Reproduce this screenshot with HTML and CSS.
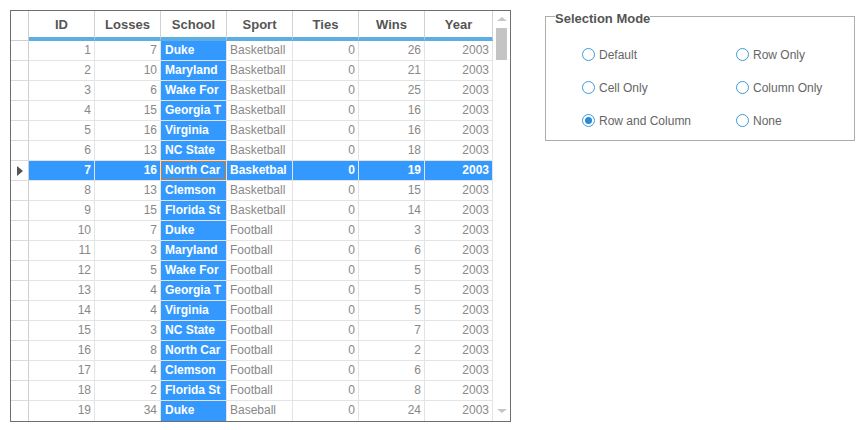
FILE: index.html
```html
<!DOCTYPE html>
<html>
<head>
<meta charset="utf-8">
<link rel="stylesheet" href="styles.css">
</head>
<body>
<div class="page">
  <div class="grid">
    <div class="table">
      <div class="row head">
        <div class="h rh"></div>
        <div class="h">ID</div>
        <div class="h">Losses</div>
        <div class="h">School</div>
        <div class="h">Sport</div>
        <div class="h">Ties</div>
        <div class="h">Wins</div>
        <div class="h">Year</div>
      </div>
      <div class="row"><div class="c rh"></div><div class="c n">1</div><div class="c n">7</div><div class="c s">Duke</div><div class="c t">Basketball</div><div class="c n">0</div><div class="c n">26</div><div class="c n">2003</div></div>
      <div class="row"><div class="c rh"></div><div class="c n">2</div><div class="c n">10</div><div class="c s">Maryland</div><div class="c t">Basketball</div><div class="c n">0</div><div class="c n">21</div><div class="c n">2003</div></div>
      <div class="row"><div class="c rh"></div><div class="c n">3</div><div class="c n">6</div><div class="c s">Wake For</div><div class="c t">Basketball</div><div class="c n">0</div><div class="c n">25</div><div class="c n">2003</div></div>
      <div class="row"><div class="c rh"></div><div class="c n">4</div><div class="c n">15</div><div class="c s">Georgia T</div><div class="c t">Basketball</div><div class="c n">0</div><div class="c n">16</div><div class="c n">2003</div></div>
      <div class="row"><div class="c rh"></div><div class="c n">5</div><div class="c n">16</div><div class="c s">Virginia</div><div class="c t">Basketball</div><div class="c n">0</div><div class="c n">16</div><div class="c n">2003</div></div>
      <div class="row"><div class="c rh"></div><div class="c n">6</div><div class="c n">13</div><div class="c s">NC State</div><div class="c t">Basketball</div><div class="c n">0</div><div class="c n">18</div><div class="c n">2003</div></div>
      <div class="row sel"><div class="c rh"><svg width="6" height="10" viewBox="0 0 6 10"><polygon points="0,0 6,5 0,10" fill="#555"/></svg></div><div class="c n">7</div><div class="c n">16</div><div class="c s cur">North Car</div><div class="c t">Basketbal</div><div class="c n">0</div><div class="c n">19</div><div class="c n">2003</div></div>
      <div class="row"><div class="c rh"></div><div class="c n">8</div><div class="c n">13</div><div class="c s">Clemson</div><div class="c t">Basketball</div><div class="c n">0</div><div class="c n">15</div><div class="c n">2003</div></div>
      <div class="row"><div class="c rh"></div><div class="c n">9</div><div class="c n">15</div><div class="c s">Florida St</div><div class="c t">Basketball</div><div class="c n">0</div><div class="c n">14</div><div class="c n">2003</div></div>
      <div class="row"><div class="c rh"></div><div class="c n">10</div><div class="c n">7</div><div class="c s">Duke</div><div class="c t">Football</div><div class="c n">0</div><div class="c n">3</div><div class="c n">2003</div></div>
      <div class="row"><div class="c rh"></div><div class="c n">11</div><div class="c n">3</div><div class="c s">Maryland</div><div class="c t">Football</div><div class="c n">0</div><div class="c n">6</div><div class="c n">2003</div></div>
      <div class="row"><div class="c rh"></div><div class="c n">12</div><div class="c n">5</div><div class="c s">Wake For</div><div class="c t">Football</div><div class="c n">0</div><div class="c n">5</div><div class="c n">2003</div></div>
      <div class="row"><div class="c rh"></div><div class="c n">13</div><div class="c n">4</div><div class="c s">Georgia T</div><div class="c t">Football</div><div class="c n">0</div><div class="c n">5</div><div class="c n">2003</div></div>
      <div class="row"><div class="c rh"></div><div class="c n">14</div><div class="c n">4</div><div class="c s">Virginia</div><div class="c t">Football</div><div class="c n">0</div><div class="c n">5</div><div class="c n">2003</div></div>
      <div class="row"><div class="c rh"></div><div class="c n">15</div><div class="c n">3</div><div class="c s">NC State</div><div class="c t">Football</div><div class="c n">0</div><div class="c n">7</div><div class="c n">2003</div></div>
      <div class="row"><div class="c rh"></div><div class="c n">16</div><div class="c n">8</div><div class="c s">North Car</div><div class="c t">Football</div><div class="c n">0</div><div class="c n">2</div><div class="c n">2003</div></div>
      <div class="row"><div class="c rh"></div><div class="c n">17</div><div class="c n">4</div><div class="c s">Clemson</div><div class="c t">Football</div><div class="c n">0</div><div class="c n">6</div><div class="c n">2003</div></div>
      <div class="row"><div class="c rh"></div><div class="c n">18</div><div class="c n">2</div><div class="c s">Florida St</div><div class="c t">Football</div><div class="c n">0</div><div class="c n">8</div><div class="c n">2003</div></div>
      <div class="row last"><div class="c rh"></div><div class="c n">19</div><div class="c n">34</div><div class="c s">Duke</div><div class="c t">Baseball</div><div class="c n">0</div><div class="c n">24</div><div class="c n">2003</div></div>
    </div>
    <div class="scroll">
      <div class="arrow up"></div>
      <div class="thumb"></div>
      <div class="spacer"></div>
      <div class="arrow down"></div>
    </div>
  </div>

  <fieldset class="modes">
    <legend>Selection Mode</legend>
    <div class="opts">
      <label class="opt"><span class="radio"></span>Default</label>
      <label class="opt"><span class="radio"></span>Row Only</label>
      <label class="opt"><span class="radio"></span>Cell Only</label>
      <label class="opt"><span class="radio"></span>Column Only</label>
      <label class="opt"><span class="radio on"></span>Row and Column</label>
      <label class="opt"><span class="radio"></span>None</label>
    </div>
  </fieldset>
</div>
</body>
</html>
```

FILE: styles.css
```css
* { box-sizing: border-box; }
html, body { margin: 0; padding: 0; background: #fff; }
body { font-family: "Liberation Sans", Arial, sans-serif; }

.page {
  display: flex;
  align-items: flex-start;
  padding: 10px 0 0 10px;
  gap: 34px;
}

.grid {
  display: flex;
  width: 501px;
  height: 412px;
  border: 1px solid #6e6e6e;
  overflow: hidden;
}

.table { width: 482px; }

.row {
  display: grid;
  grid-template-columns: 18px repeat(6, 66px) 68px;
  height: 20px;
}

.row.head { height: 30px; }

.h {
  height: 30px;
  border-right: 1px solid #d2d2d2;
  border-bottom: 4px solid #5eaee0;
  font-size: 13px;
  font-weight: bold;
  color: #555;
  line-height: 24px;
  padding-top: 2px;
  text-align: center;
}
.h.rh { border-bottom: 1px solid #cfcfcf; border-right-color: #cfcfcf; }

.c {
  height: 20px;
  border-right: 1px solid #e4e4e4;
  border-bottom: 1px solid #e4e4e4;
  font-size: 12px;
  line-height: 19px;
  color: #888;
  white-space: nowrap;
  overflow: hidden;
  padding: 0 3px;
}
.c.rh {
  border-right-color: #cfcfcf;
  border-bottom-color: #dcdcdc;
  display: flex;
  align-items: center;
  justify-content: center;
  padding: 0;
}
.c.n { text-align: right; }
.c.t { text-align: left; }
.c.s {
  background: #3399ff;
  color: #fff;
  font-weight: bold;
  padding-left: 4px;
}

.sel .c { background: #3399ff; color: #fff; font-weight: bold; }
.sel .c.rh { background: #fff; }
.sel .c.cur { box-shadow: inset 0 0 0 1px #c97a2c; }

.row.last .c { border-bottom: none; }

.scroll {
  width: 17px;
  display: flex;
  flex-direction: column;
  align-items: center;
  padding: 6px 0 8px;
}
.arrow {
  width: 0;
  height: 0;
  border-left: 5px solid transparent;
  border-right: 5px solid transparent;
}
.arrow.up { border-bottom: 4px solid #c6c6c6; }
.arrow.down { border-top: 4px solid #c6c6c6; }
.thumb {
  width: 11px;
  height: 32px;
  margin-top: 7px;
  background: #c4c4c4;
}
.spacer { flex: 1; }

.modes {
  width: 310px;
  margin: -4px 0 0 0;
  padding: 0;
  border: 1px solid #adadad;
}
.modes legend {
  font-size: 13px;
  font-weight: bold;
  color: #555;
  line-height: 15px;
  padding: 5px 0 0 0;
  margin-left: 9px;
}

.opts {
  display: grid;
  grid-template-columns: 154px 1fr;
  grid-auto-rows: 33px;
  padding: 12px 0 3px 36px;
}
.opt {
  display: flex;
  align-items: center;
  gap: 4px;
  font-size: 12px;
  color: #666;
}
.radio {
  width: 13px;
  height: 13px;
  border: 1px solid #3d9bd8;
  border-radius: 50%;
  display: flex;
  align-items: center;
  justify-content: center;
  flex: none;
}
.radio.on::after {
  content: "";
  width: 7px;
  height: 7px;
  border-radius: 50%;
  background: #2a8ad6;
}
```
